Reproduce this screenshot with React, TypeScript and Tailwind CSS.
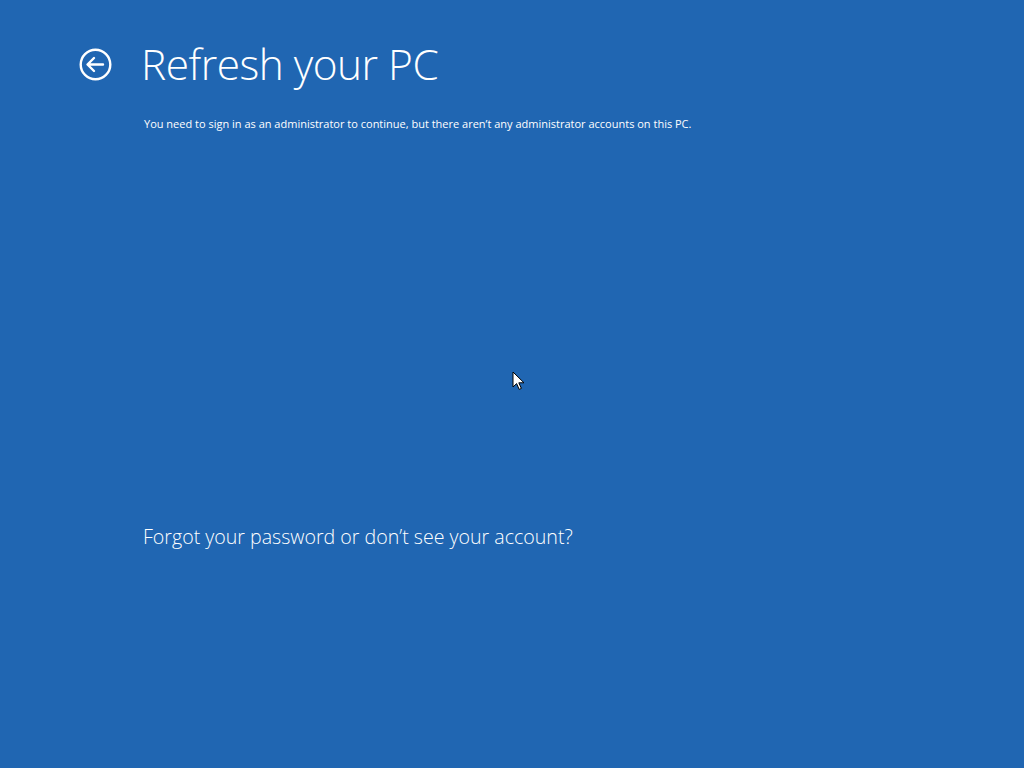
export default function App() {
  return (
    <div
      className="relative w-[1024px] h-[768px] bg-[#2066b2] text-white overflow-hidden"
      style={{ fontFamily: '"Open Sans", "Liberation Sans", sans-serif' }}
    >
      <div className="flex flex-col pt-[34px]">
        <div className="flex items-center">
          <button className="ml-[79px] w-[33px] h-[33px] flex items-center justify-center">
            <svg width="33" height="33" viewBox="0 0 33 33" fill="none" stroke="white" strokeWidth="2.4">
              <circle cx="16.5" cy="16.5" r="14.8" />
              <path d="M9 16.5h15M15 10l-6.5 6.5L15 23" strokeLinecap="round" strokeLinejoin="round" />
            </svg>
          </button>
          <h1 className="ml-[29px] text-[42.4px] font-light leading-[60px] tracking-[-0.5px]">Refresh your PC</h1>
        </div>
        <p className="ml-[144px] mt-[22px] text-[11px] leading-[16px]">
          You need to sign in as an administrator to continue, but there aren’t any administrator accounts on this PC.
        </p>
        <div className="ml-[143px] mt-[391px] text-[19.6px] font-light leading-[28px]">
          Forgot your password or don’t see your account?
        </div>
      </div>
      <svg className="absolute left-[512px] top-[371px]" width="13" height="20" viewBox="0 0 13 20">
        <path d="M1 1v15l3.6-3.4 2.6 5.8 2.2-1-2.6-5.6H12z" fill="white" stroke="black" strokeWidth="1" strokeLinejoin="round" />
      </svg>
    </div>
  );
}
